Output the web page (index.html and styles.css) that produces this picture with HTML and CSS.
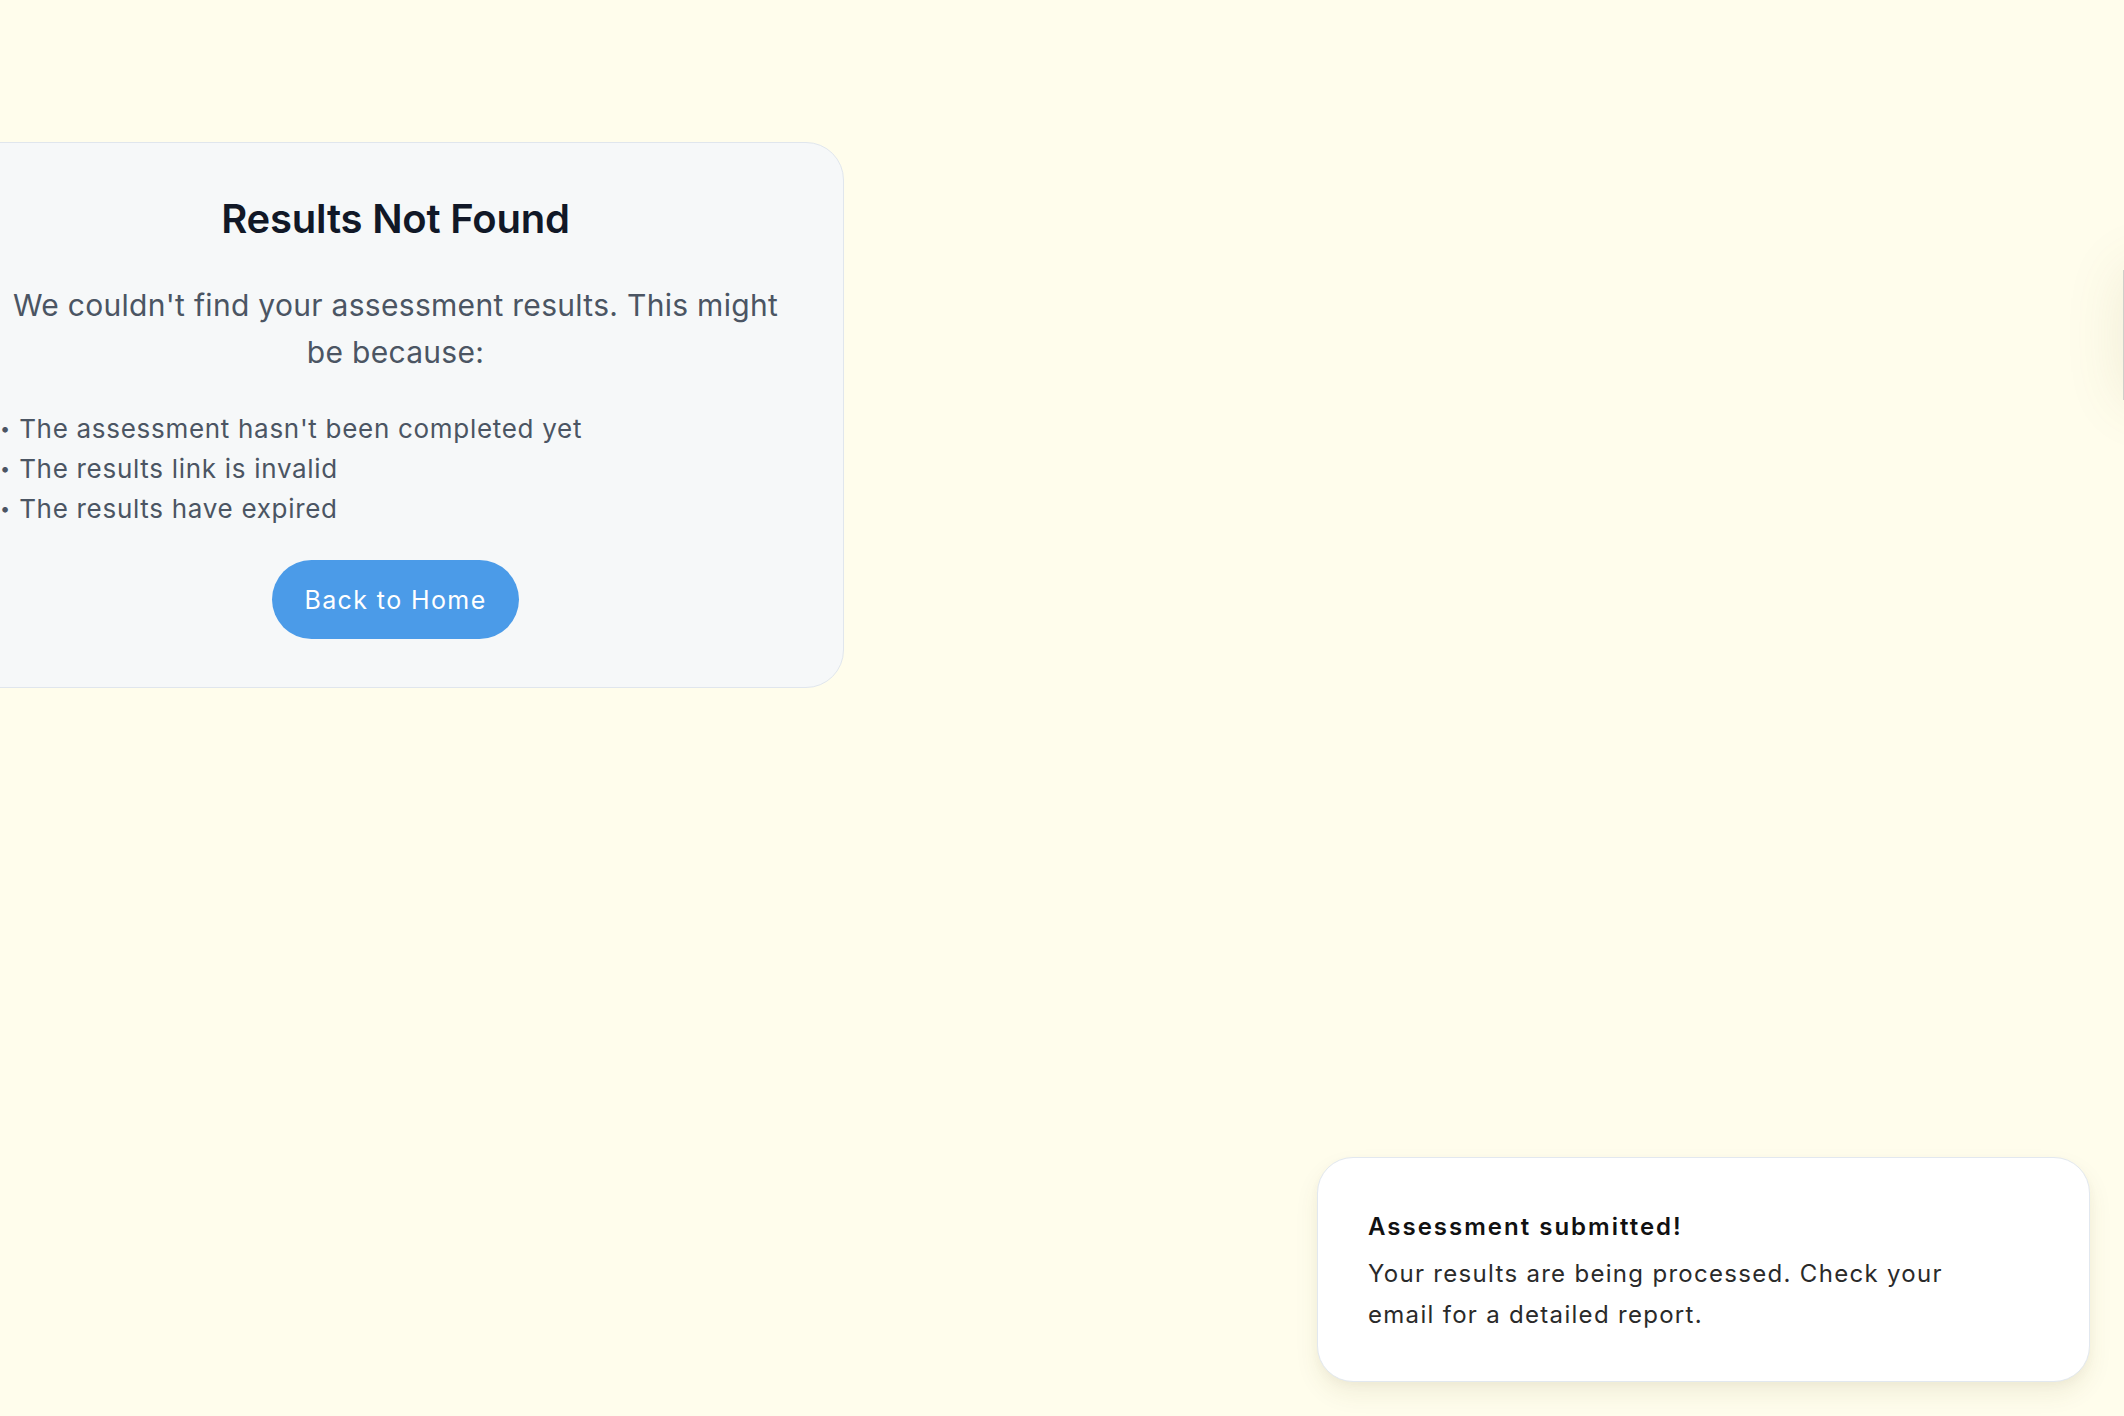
FILE: index.html
```html
<!DOCTYPE html>
<html lang="en">
<head>
<meta charset="utf-8">
<title>Results Not Found</title>
<link rel="stylesheet" href="styles.css">
</head>
<body>
<main class="page">
  <section class="card">
    <h1 class="card-title">Results Not Found</h1>
    <p class="card-text">We couldn't find your assessment results. This might be because:</p>
    <ul class="reasons">
      <li>The assessment hasn't been completed yet</li>
      <li>The results link is invalid</li>
      <li>The results have expired</li>
    </ul>
    <div class="actions">
      <a class="btn" href="#">Back to Home</a>
    </div>
  </section>
</main>
<div class="edge-panel"></div>
<div class="toast" role="status">
  <div class="toast-title">Assessment submitted!</div>
  <div class="toast-body">Your results are being processed. Check your email for a detailed report.</div>
</div>
</body>
</html>
```
FILE: styles.css
```css
* { box-sizing: border-box; }
html, body { margin: 0; padding: 0; }
body {
  background: #fffdec;
  font-family: Inter, "Noto Sans", "Liberation Sans", sans-serif;
  width: 2124px;
  height: 1416px;
  overflow: hidden;
  position: relative;
}
.page {
  padding-top: 142px;
}
.card {
  margin-left: -53px;
  width: 897px;
  background: #f6f8f9;
  border: 1.5px solid #e0e6ed;
  border-radius: 38px;
  padding: 49px 48px 48px;
}
.card-title {
  margin: 0;
  text-align: center;
  font-size: 40px;
  line-height: 54px;
  font-weight: 600;
  color: #111827;
  letter-spacing: -0.2px;
}
.card-text {
  margin: 36px 0 0;
  text-align: center;
  font-size: 30px;
  line-height: 47px;
  letter-spacing: 0.3px;
  color: #4b5563;
}
.reasons {
  list-style: none;
  margin: 33px 0 0;
  padding: 0 0 0 4px;
  font-size: 26px;
  line-height: 40px;
  letter-spacing: 0.7px;
  color: #4b5563;
}
.reasons li {
  height: 40px;
}
.reasons li::before {
  content: "•";
  font-size: 18px;
  line-height: 0;
  vertical-align: 3px;
  margin-right: 9px;
  letter-spacing: 0;
}
.actions {
  display: flex;
  justify-content: center;
  margin-top: 31px;
}
.btn {
  display: inline-flex;
  align-items: center;
  justify-content: center;
  height: 79px;
  width: 247px;
  border-radius: 40px;
  background: #4b9be8;
  color: #ffffff;
  font-size: 25px;
  letter-spacing: 1.4px;
  text-decoration: none;
  font-weight: 400;
}
.edge-panel {
  position: absolute;
  left: 2123px;
  top: 270px;
  width: 300px;
  height: 130px;
  background: #f7f7f3;
  border-left: 1px solid #cfcfca;
  box-shadow: 0 0 60px rgba(120, 110, 60, 0.12);
}
.toast {
  position: absolute;
  left: 1317px;
  top: 1157px;
  width: 773px;
  height: 225px;
  background: #ffffff;
  border: 1.5px solid #e2e8ef;
  border-radius: 36px;
  padding: 48px 50px;
  box-shadow: 0 12px 24px rgba(90, 80, 30, 0.08), 0 4px 8px rgba(90, 80, 30, 0.04);
}
.toast-title {
  font-size: 24px;
  line-height: 41px;
  font-weight: 600;
  letter-spacing: 2px;
  color: #111111;
}
.toast-body {
  margin-top: 6px;
  max-width: 610px;
  font-size: 24px;
  line-height: 41px;
  letter-spacing: 1.3px;
  color: #2a2a2a;
}
```
